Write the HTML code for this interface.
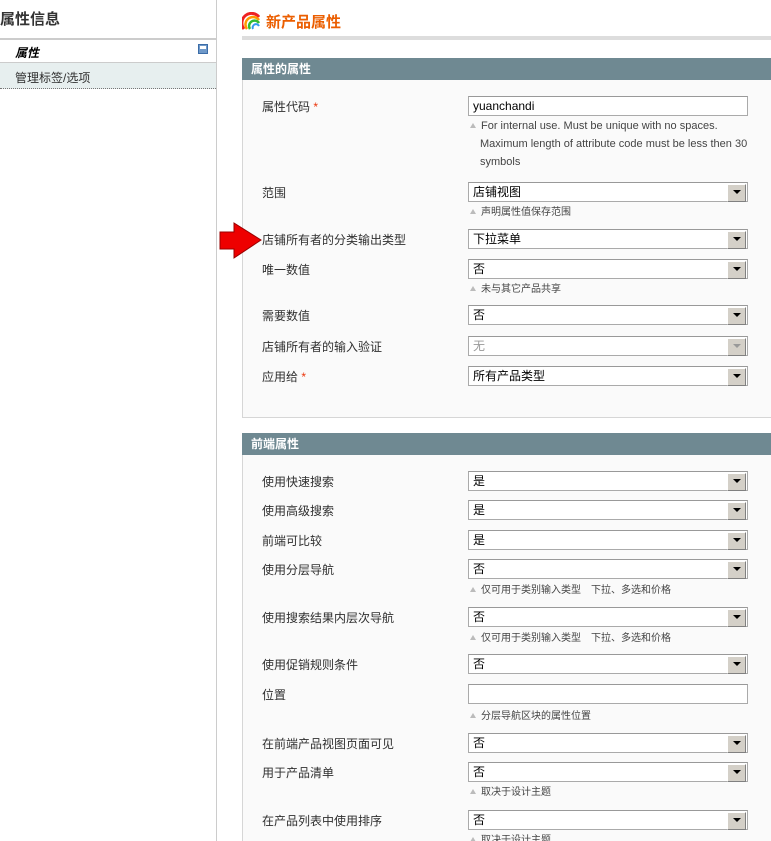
<!DOCTYPE html>
<html><head><meta charset="utf-8"><style>
*{margin:0;padding:0;box-sizing:border-box}
html{width:771px;height:841px;overflow:hidden}
body{width:771px;height:841px;overflow:hidden;background:#fff;font-family:"Liberation Sans","Noto Sans CJK SC",sans-serif;font-size:12px;color:#2f2f2f;position:relative}
.a{position:absolute;white-space:nowrap}
.lb{position:absolute;left:262px;font-size:12px;color:#2f2f2f}
.s{position:absolute;left:468px;width:280px;height:20px;background:#fff;border:1px solid #aaa;border-top-color:#999;font-size:12px;line-height:18px;padding-left:4px;color:#000}
.s:after{content:"";position:absolute;right:1px;top:1px;width:17px;height:16px;background:#d4d0c8;border:1px solid;border-color:#fff #808080 #808080 #fff;z-index:1}
.s:before{content:"";position:absolute;right:6px;top:7px;border-left:4px solid transparent;border-right:4px solid transparent;border-top:4px solid #000;z-index:2}
.s.d{color:#999}.s.d:before{border-top-color:#999}
.t:after,.t:before{display:none}
.n{position:absolute;left:470px;font-size:10px;color:#444;line-height:18px}
.n i{display:inline-block;width:0;height:0;border-left:3px solid transparent;border-right:3px solid transparent;border-bottom:5px solid #bbb;margin-right:5px;vertical-align:1px}
.hd{position:absolute;left:242px;width:529px;height:22px;background:#6f8992;color:#fff;font-weight:bold;font-size:12px;line-height:22px;padding-left:9px}
.bx{position:absolute;left:242px;width:529px;background:#fafafa;border:1px solid #d6d6d6;border-top:0;border-right:0}
.r{color:#eb340a}
</style></head><body>
<div class="a" style="left:0;top:8px;font-size:15px;font-weight:bold;color:#333">属性信息</div>
<div class="a" style="left:216px;top:0;width:1px;height:841px;background:#ccc"></div>
<div class="a" style="left:0;top:38px;width:216px;height:2px;background:#ccc"></div>
<div class="a" style="left:15px;top:44px;font-weight:bold;font-style:italic;color:#000">属性</div>
<div class="a" style="left:198px;top:44px;width:10px;height:10px;background:#6f99c9;border:1px solid #3c6da8"><div style="margin:1px;height:3px;background:#fff"></div></div>
<div class="a" style="left:0;top:62px;width:216px;height:1px;background:#ccc"></div>
<div class="a" style="left:0;top:63px;width:216px;height:26px;background:#e7efef;border-bottom:1px dotted #777;padding:6px 0 0 15px;color:#2f2f2f">管理标签/选项</div>

<svg class="a" style="left:242px;top:12px" width="18" height="18" viewBox="0 0 18 18"><path d="M2 17 A9 9 0 0 1 17 5" stroke="#e22" stroke-width="3" fill="none"/><path d="M5 17 A7 7 0 0 1 17 8" stroke="#f90" stroke-width="2.5" fill="none"/><path d="M8 17 A5 5 0 0 1 17 11" stroke="#3b3" stroke-width="2.5" fill="none"/><path d="M11 17 A3 3 0 0 1 17 14" stroke="#39e" stroke-width="2" fill="none"/></svg>
<div class="a" style="left:266px;top:11px;font-size:15px;font-weight:bold;color:#eb5e00">新产品属性</div>
<div class="a" style="left:242px;top:36px;width:529px;height:4px;background:#ddd"></div>

<div class="hd" style="top:58px">属性的属性</div>
<div class="bx" style="top:80px;height:338px"></div>
<div class="lb" style="top:98px">属性代码 <span class="r">*</span></div>
<div class="s t" style="top:96px">yuanchandi</div>
<div class="n" style="top:117px;font-size:11px"><i></i>For internal use. Must be unique with no spaces.<br><span style="margin-left:10px">Maximum length of attribute code must be less then 30</span><br><span style="margin-left:10px">symbols</span></div>
<div class="lb" style="top:184px">范围</div><div class="s" style="top:182px">店铺视图</div><div class="n" style="top:204px"><i></i>声明属性值保存范围</div>
<svg class="a" style="left:219px;top:222px" width="44" height="38"><polygon points="1,10 15,10 15,1 42,18 15,36 15,27 1,27" fill="#e00" stroke="#900" stroke-width="1"/></svg>
<div class="lb" style="top:231px">店铺所有者的分类输出类型</div><div class="s" style="top:229px">下拉菜单</div>
<div class="lb" style="top:261px">唯一数值</div><div class="s" style="top:259px">否</div><div class="n" style="top:281px"><i></i>未与其它产品共享</div>
<div class="lb" style="top:307px">需要数值</div><div class="s" style="top:305px">否</div>
<div class="lb" style="top:338px">店铺所有者的输入验证</div><div class="s d" style="top:336px">无</div>
<div class="lb" style="top:368px">应用给 <span class="r">*</span></div><div class="s" style="top:366px">所有产品类型</div>

<div class="hd" style="top:433px">前端属性</div>
<div class="bx" style="top:455px;height:386px;border-bottom:0"></div>
<div class="lb" style="top:473px">使用快速搜索</div><div class="s" style="top:471px">是</div>
<div class="lb" style="top:502px">使用高级搜索</div><div class="s" style="top:500px">是</div>
<div class="lb" style="top:532px">前端可比较</div><div class="s" style="top:530px">是</div>
<div class="lb" style="top:561px">使用分层导航</div><div class="s" style="top:559px">否</div><div class="n" style="top:582px"><i></i>仅可用于类别输入类型　下拉、多选和价格</div>
<div class="lb" style="top:609px">使用搜索结果内层次导航</div><div class="s" style="top:607px">否</div><div class="n" style="top:630px"><i></i>仅可用于类别输入类型　下拉、多选和价格</div>
<div class="lb" style="top:656px">使用促销规则条件</div><div class="s" style="top:654px">否</div>
<div class="lb" style="top:686px">位置</div><div class="s t" style="top:684px"></div><div class="n" style="top:708px"><i></i>分层导航区块的属性位置</div>
<div class="lb" style="top:735px">在前端产品视图页面可见</div><div class="s" style="top:733px">否</div>
<div class="lb" style="top:764px">用于产品清单</div><div class="s" style="top:762px">否</div><div class="n" style="top:784px"><i></i>取决于设计主题</div>
<div class="lb" style="top:812px">在产品列表中使用排序</div><div class="s" style="top:810px">否</div><div class="n" style="top:832px"><i></i>取决于设计主题</div>
</body></html>
